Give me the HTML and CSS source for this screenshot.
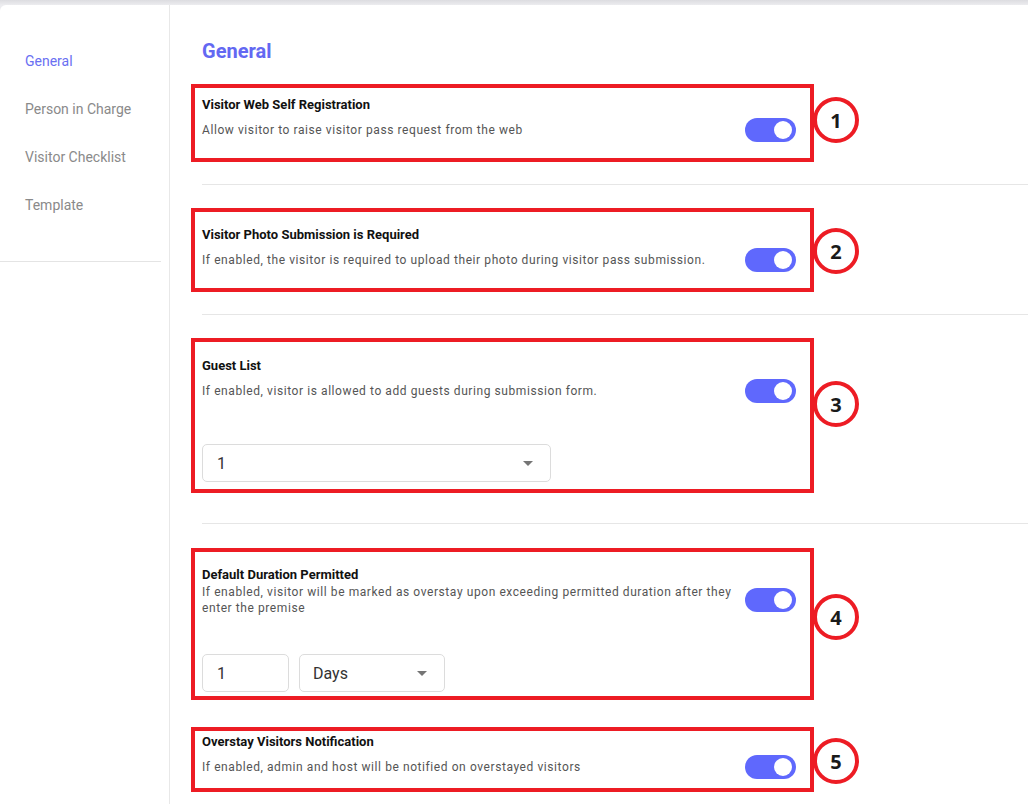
FILE: index.html
```html
<!DOCTYPE html>
<html lang="en">
<head>
    <meta charset="UTF-8">
    <meta name="viewport" content="width=device-width, initial-scale=1.0">
    <title>Settings - General</title>
    <link rel="stylesheet" href="styles.css">
</head>

<body>
    <div class="page">
        <aside class="sidebar">
            <ul class="side-nav">
                <li class="active">General</li>
                <li>Person in Charge</li>
                <li>Visitor Checklist</li>
                <li>Template</li>
            </ul>
        </aside>

        <main class="content">
            <h2 class="content-title">General</h2>

            <section class="setting setting-web">
                <h4 class="setting-title">Visitor Web Self Registration</h4>
                <div class="setting-row">
                    <p class="setting-desc">Allow visitor to raise visitor pass request from the web</p>
                    <span class="switch"></span>
                </div>
                <span class="marker">1</span>
            </section>
            <hr class="divider">

            <section class="setting setting-photo">
                <h4 class="setting-title">Visitor Photo Submission is Required</h4>
                <div class="setting-row">
                    <p class="setting-desc">If enabled, the visitor is required to upload their photo during visitor pass submission.</p>
                    <span class="switch"></span>
                </div>
                <span class="marker">2</span>
            </section>
            <hr class="divider">

            <section class="setting setting-guest">
                <h4 class="setting-title">Guest List</h4>
                <div class="setting-row">
                    <p class="setting-desc">If enabled, visitor is allowed to add guests during submission form.</p>
                    <span class="switch"></span>
                </div>
                <div class="setting-controls">
                    <div class="select select-guest">1 <span class="caret"></span></div>
                </div>
                <span class="marker">3</span>
            </section>
            <hr class="divider divider-wide">

            <section class="setting setting-duration">
                <h4 class="setting-title">Default Duration Permitted</h4>
                <div class="setting-row">
                    <p class="setting-desc">If enabled, visitor will be marked as overstay upon exceeding permitted duration after they enter the premise</p>
                    <span class="switch"></span>
                </div>
                <div class="setting-controls">
                    <div class="select input-num">1</div>
                    <div class="select select-unit">Days <span class="caret"></span></div>
                </div>
                <span class="marker">4</span>
            </section>

            <section class="setting setting-overstay">
                <h4 class="setting-title">Overstay Visitors Notification</h4>
                <div class="setting-row">
                    <p class="setting-desc">If enabled, admin and host will be notified on overstayed visitors</p>
                    <span class="switch"></span>
                </div>
                <span class="marker">5</span>
            </section>
        </main>
    </div>
</body>
</html>
```

FILE: styles.css
```css
body {
    margin: 0;
    font-family: Roboto, 'Liberation Sans', sans-serif;
    background: linear-gradient(#dcdce0, #ececef 5px);
}

.page {
    display: flex;
    margin-top: 5px;
    min-height: calc(100vh - 5px);
    background-color: #fff;
    border-top-left-radius: 6px;
}

.sidebar {
    width: 169px;
    border-right: 1px solid #e8e8e8;
}

.side-nav {
    list-style: none;
    margin: 0 8px 0 0;
    padding: 32px 0;
    border-bottom: 1px solid #e4e4e4;
}

.side-nav li {
    padding-left: 25px;
    height: 48px;
    line-height: 48px;
    font-size: 14px;
    color: #8a8a8a;
}

.side-nav li.active {
    color: #6a6ff2;
}

.content {
    flex: 1;
    padding: 34px 0 0 32px;
}

.content-title {
    margin: 0 0 21px;
    font-size: 20px;
    line-height: 24px;
    font-weight: 700;
    color: #6368f2;
}

/* red annotation frame around each option */
.setting {
    position: relative;
    box-sizing: border-box;
    width: 623px;
    margin-left: -11px;
    padding: 0 14px 0 7px;
    border: 4px solid #ed1c24;
}

.setting-web {
    padding-top: 9px;
    padding-bottom: 16px;
}

.setting-photo {
    padding-top: 15px;
    padding-bottom: 16px;
}

.setting-guest {
    padding-top: 16px;
    padding-bottom: 7px;
}

.setting-duration {
    padding-top: 15px;
    padding-bottom: 4px;
}

.setting-overstay {
    margin-top: 27px;
    padding-top: 3px;
    padding-bottom: 9px;
}

.setting-title {
    margin: 0;
    font-size: 13px;
    line-height: 16px;
    font-weight: 700;
    color: #111;
}

.setting-row {
    display: flex;
    align-items: center;
    gap: 12px;
    margin-top: 5px;
}

.setting-duration .setting-row {
    margin-top: 1px;
}

.setting-desc {
    flex: 1;
    margin: 0;
    font-size: 12px;
    line-height: 16px;
    letter-spacing: 0.58px;
    color: #555;
}

.switch {
    position: relative;
    flex-shrink: 0;
    width: 51px;
    height: 24px;
    border-radius: 12px;
    background-color: #5f68fd;
}

.switch::after {
    content: "";
    position: absolute;
    top: 3px;
    right: 4px;
    width: 18px;
    height: 18px;
    border-radius: 50%;
    background-color: #fff;
}

.setting-controls {
    display: flex;
    gap: 10px;
    margin-top: 41px;
}

.setting-duration .setting-controls {
    margin-top: 38px;
}

.select {
    box-sizing: border-box;
    display: flex;
    align-items: center;
    justify-content: space-between;
    height: 38px;
    padding: 0 17px 0 14px;
    border: 1px solid #dcdcdc;
    border-radius: 5px;
    font-size: 16px;
    color: #333;
}

.select-guest {
    width: 349px;
}

.input-num {
    width: 87px;
}

.select-unit {
    width: 146px;
    padding-left: 13px;
}

.caret {
    width: 0;
    height: 0;
    border-left: 5px solid transparent;
    border-right: 5px solid transparent;
    border-top: 5px solid #757575;
}

.divider {
    margin: 22px 0 23px;
    border: 0;
    border-top: 1px solid #e6e6e6;
}

.divider-wide {
    margin: 30px 0 24px;
}

/* numbered circles */
.marker {
    position: absolute;
    left: calc(100% + 3px);
    box-sizing: border-box;
    display: flex;
    align-items: center;
    justify-content: center;
    width: 46px;
    height: 46px;
    border: 4px solid #ed1c24;
    border-radius: 50%;
    background-color: #fff;
    font-family: 'Open Sans', sans-serif;
    font-size: 20px;
    font-weight: 700;
    color: #1a1a1a;
}

.setting-web .marker { top: 9px; }
.setting-photo .marker { top: 16px; }
.setting-guest .marker { top: 39px; }
.setting-duration .marker { top: 42px; }
.setting-overstay .marker { top: 7px; }
```
